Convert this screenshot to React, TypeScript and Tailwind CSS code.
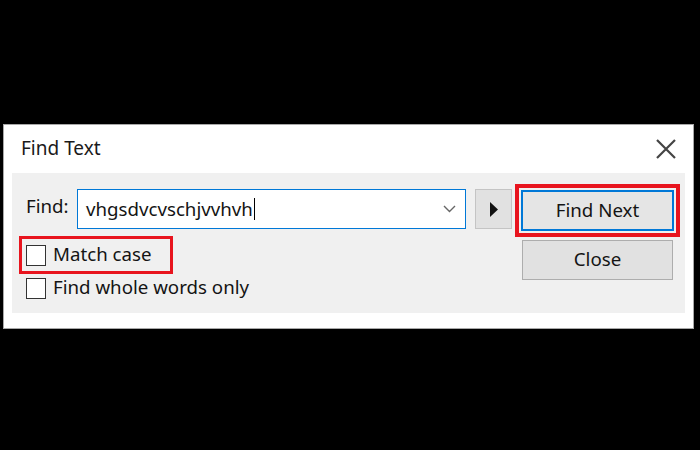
import React from "react";

// Windows-style "Find Text" dialog on a dark backdrop
function CheckBox() {
  return <div className="w-[20px] h-[21px] border border-[#333333] bg-white shrink-0" />;
}

export default function App() {
  return (
    <div
      className="w-[700px] h-[450px] bg-black pt-[124px] pl-[3px]"
      style={{ fontFamily: '"Noto Sans", "Open Sans", sans-serif' }}
    >
      <div className="w-[691px] h-[205px] bg-white border border-[#a8a8a8] flex flex-col">
        {/* Title bar */}
        <div className="h-[48px] flex items-start justify-between pl-[17px] pr-[16px]">
          <span className="mt-[10px] text-[19px] text-[#1a1a1a] leading-[26px]">Find Text</span>
          <svg width="22" height="22" viewBox="0 0 22 22" className="mt-[13px]">
            <path d="M2 2 L20 20 M20 2 L2 20" stroke="#444" strokeWidth="2.2" fill="none" />
          </svg>
        </div>

        {/* Content panel */}
        <div className="mx-[8px] h-[140px] bg-[#f0f0f0] flex pt-[11px] pl-[7px] text-[18.7px] text-[#141414]">
          {/* Left column */}
          <div className="flex flex-col pt-[5px]">
            <div className="flex items-center">
              <span className="ml-[7px] w-[51px] leading-[40px] -mt-[6px]">Find:</span>
              <div className="w-[389px] h-[40px] border border-[#0078d7] bg-white flex items-center pl-[8px] pr-[9px]">
                <span className="leading-[24px] -mt-[1px]">vhgsdvcvschjvvhvh</span>
                <span className="w-[1px] h-[22px] bg-black ml-[1px]" />
                <div className="flex-1" />
                <svg width="13" height="8" viewBox="0 0 13 8">
                  <path d="M1 1 L6.5 6.5 L12 1" stroke="#666" strokeWidth="1.4" fill="none" />
                </svg>
              </div>
              <div className="ml-[9px] w-[37px] h-[40px] bg-[#e1e1e1] border border-[#c4c4c4] flex items-center justify-center">
                <svg width="9" height="15" viewBox="0 0 9 15">
                  <path d="M1 0 L9 7.5 L1 15 Z" fill="#111" />
                </svg>
              </div>
            </div>

            <div className="mt-[7px] w-[154px] h-[38px] border-[3px] border-[#e8141e] flex items-center pl-[4px]">
              <CheckBox />
              <span className="ml-[7px] leading-[24px] -mt-[3px]">Match case</span>
            </div>
            <div className="mt-[3px] flex items-center pl-[7px]">
              <CheckBox />
              <span className="ml-[7px] leading-[24px] -mt-[2px]">Find whole words only</span>
            </div>
          </div>

          {/* Right column */}
          <div className="flex flex-col ml-[3px]">
            <div className="w-[165px] h-[53px] border-[4px] border-[#e8141e] p-[2px]">
              <div className="w-full h-full border-2 border-[#0078d7] bg-[#e5e5e5] flex items-center justify-center">
                <span className="leading-[24px] -mt-[2px]">Find Next</span>
              </div>
            </div>
            <div className="mt-[3px] ml-[7px] w-[151px] h-[40px] bg-[#e1e1e1] border border-[#adadad] flex items-center justify-center">
              <span className="leading-[24px] -mt-[2px]">Close</span>
            </div>
          </div>
        </div>
      </div>
    </div>
  );
}
